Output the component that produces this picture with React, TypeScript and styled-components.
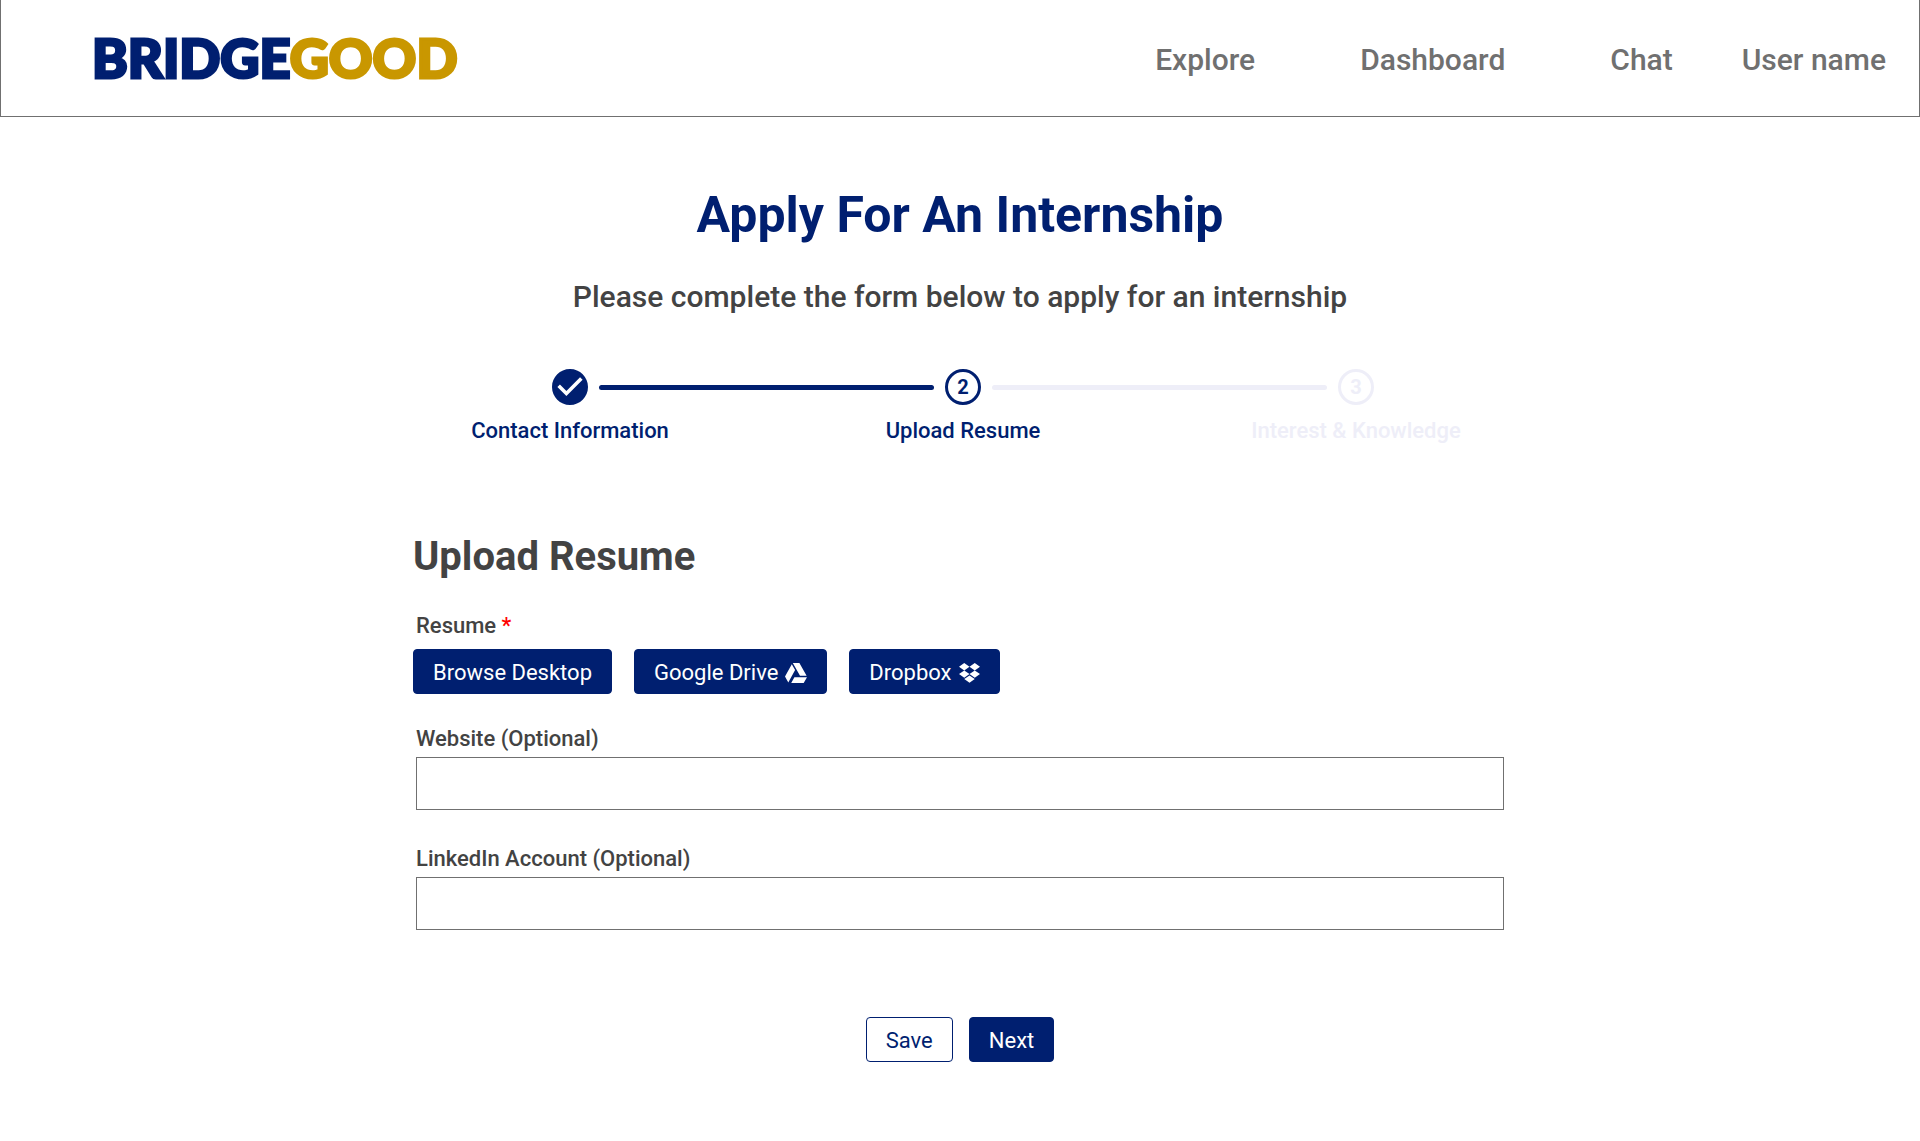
import React from "react";
import styled, { createGlobalStyle, css } from "styled-components";

const navy = "#001f70";
const gold = "#c99700";
const grey = "#707070";
const ink = "#434343";
const faint = "#eeeef8";

const GlobalStyle = createGlobalStyle`
  *, *::before, *::after { box-sizing: border-box; }
  body {
    margin: 0;
    background: #fff;
    color: ${ink};
    font-family: Roboto, "Liberation Sans", sans-serif;
    font-size: 22px;
    line-height: 26px;
  }
  h1, h2, p, ol { margin: 0; padding: 0; }
  button, input { font: inherit; }
`;

const Header = styled.header`
  display: flex;
  align-items: center;
  justify-content: space-between;
  padding: 26px 33px 22px 91px;
  border: 1px solid ${grey};
  border-top: 0;
`;

const Logo = styled.a`
  padding-bottom: 4px;
  font-family: Lato, sans-serif;
  font-size: 54px;
  font-weight: 900;
  line-height: 64px;
  color: ${navy};
  text-decoration: none;
  -webkit-text-stroke: 3px currentColor;
`;

const LogoAccent = styled.span`
  color: ${gold};
  -webkit-text-stroke-color: ${gold};
`;

const Nav = styled.nav`
  display: flex;
  align-items: center;
  gap: 69px;
`;

const NavGroup = styled.div`
  display: flex;
  gap: 105px;
`;

const NavLink = styled.a`
  font-size: 30px;
  font-weight: 500;
  line-height: 36px;
  color: ${grey};
  text-decoration: none;
`;

const Main = styled.main`
  padding: 68px 24px 79px;
`;

const Title = styled.h1`
  font-size: 50px;
  font-weight: 700;
  line-height: 60px;
  text-align: center;
  color: ${navy};
`;

const Intro = styled.p`
  margin-top: 34px;
  font-size: 30px;
  font-weight: 500;
  line-height: 36px;
  text-align: center;
`;

const Stepper = styled.ol`
  display: flex;
  max-width: 828px;
  margin: 54px auto 0;
  padding-left: 6px;
  list-style: none;
`;

const Step = styled.li<{ $color: string }>`
  display: flex;
  flex-direction: column;
  align-items: center;
  gap: 13px;
  width: 36px;
  font-weight: 500;
  white-space: nowrap;
  color: ${(p) => p.$color};
`;

const StepNumber = styled.span`
  display: flex;
  align-items: center;
  justify-content: center;
  width: 36px;
  height: 36px;
  border: 3px solid currentColor;
  border-radius: 50%;
  font-size: 20px;
  font-weight: 700;
`;

const Connector = styled.li<{ $color: string }>`
  flex: 1;
  height: 5px;
  margin: 16px 11px 0;
  border-radius: 3px;
  background: ${(p) => p.$color};
`;

const Form = styled.form`
  max-width: 1094px;
  margin: 89px auto 0;
`;

const SectionTitle = styled.h2`
  font-size: 40px;
  font-weight: 700;
  line-height: 48px;
`;

const labelText = css`
  font-weight: 500;
  line-height: 26px;
`;

const ResumeField = styled.div`
  margin-top: 32px;
`;

const ResumeLabel = styled.div`
  ${labelText}
  padding: 0 3px;
`;

const Required = styled.span`
  color: #ff0000;
`;

const Sources = styled.div`
  display: flex;
  flex-wrap: wrap;
  gap: 22px;
  margin-top: 10px;
`;

const Fields = styled.div`
  display: grid;
  gap: 36px;
  margin-top: 32px;
  padding: 0 3px;
`;

const Field = styled.div`
  display: flex;
  flex-direction: column;
  gap: 5px;
`;

const Label = styled.label`
  ${labelText}
`;

const TextInput = styled.input`
  width: 100%;
  height: 53px;
  padding: 0 16px;
  border: 1px solid ${grey};
  border-radius: 0;
  background: #fff;
`;

const Button = styled.button<{ $outline?: boolean }>`
  display: flex;
  align-items: center;
  gap: 7px;
  height: 45px;
  padding: 2px 19px 0;
  border: 1px solid ${navy};
  border-radius: 4px;
  background: ${(p) => (p.$outline ? "#fff" : navy)};
  color: ${(p) => (p.$outline ? navy : "#fff")};
  cursor: pointer;
`;

const Actions = styled.div`
  display: flex;
  justify-content: center;
  gap: 16px;
  margin-top: 87px;
`;

const CheckIcon = () => (
  <svg width="36" height="36" viewBox="2 2 20 20" fill="currentColor" aria-hidden="true">
    <path d="M12 2C6.48 2 2 6.48 2 12s4.48 10 10 10 10-4.48 10-10S17.52 2 12 2zm-2 15l-5-5 1.41-1.41L10 14.17l7.59-7.59L19 8l-9 9z" />
  </svg>
);

const DriveIcon = () => (
  <svg width="22" height="20" viewBox="0 0 22 20" fill="currentColor" aria-hidden="true">
    <path d="M7.8 0h6.6l7.2 12.8H15zM6.8 1.2l3.3 5.9L3.3 19.4 0 13.4zM9.4 14.2H22L18.7 20H6.2z" />
  </svg>
);

const DropboxIcon = () => (
  <svg width="21" height="20" viewBox="0 0 21 20" fill="currentColor" aria-hidden="true">
    <path d="M5.25 0l5.25 3.7-5.25 3.7L0 3.7zM15.75 0L21 3.7l-5.25 3.7-5.25-3.7zM5.25 7.4l5.25 3.7-5.25 3.7L0 11.1zM15.75 7.4L21 11.1l-5.25 3.7-5.25-3.7zM10.5 12.4l5.25 3.7-5.25 3.7-5.25-3.7z" />
  </svg>
);

export default function App() {
  return (
    <>
      <GlobalStyle />
      <Header>
        <Logo href="#">
          BRIDGE<LogoAccent>GOOD</LogoAccent>
        </Logo>
        <Nav>
          <NavGroup>
            <NavLink href="#explore">Explore</NavLink>
            <NavLink href="#dashboard">Dashboard</NavLink>
            <NavLink href="#chat">Chat</NavLink>
          </NavGroup>
          <NavLink href="#account">User name</NavLink>
        </Nav>
      </Header>
      <Main>
        <Title>Apply For An Internship</Title>
        <Intro>Please complete the form below to apply for an internship</Intro>
        <Stepper>
          <Step $color={navy}>
            <CheckIcon />
            <span>Contact Information</span>
          </Step>
          <Connector $color={navy} aria-hidden="true" />
          <Step $color={navy} aria-current="step">
            <StepNumber>2</StepNumber>
            <span>Upload Resume</span>
          </Step>
          <Connector $color={faint} aria-hidden="true" />
          <Step $color={faint}>
            <StepNumber>3</StepNumber>
            <span>Interest &amp; Knowledge</span>
          </Step>
        </Stepper>
        <Form onSubmit={(e) => e.preventDefault()}>
          <SectionTitle>Upload Resume</SectionTitle>
          <ResumeField role="group" aria-labelledby="resume-label">
            <ResumeLabel id="resume-label">
              Resume <Required>*</Required>
            </ResumeLabel>
            <Sources>
              <Button type="button">Browse Desktop</Button>
              <Button type="button">
                Google Drive <DriveIcon />
              </Button>
              <Button type="button">
                Dropbox <DropboxIcon />
              </Button>
            </Sources>
          </ResumeField>
          <Fields>
            <Field>
              <Label htmlFor="website">Website (Optional)</Label>
              <TextInput id="website" type="url" />
            </Field>
            <Field>
              <Label htmlFor="linkedin">LinkedIn Account (Optional)</Label>
              <TextInput id="linkedin" type="url" />
            </Field>
          </Fields>
          <Actions>
            <Button type="button" $outline>
              Save
            </Button>
            <Button type="submit">Next</Button>
          </Actions>
        </Form>
      </Main>
    </>
  );
}
